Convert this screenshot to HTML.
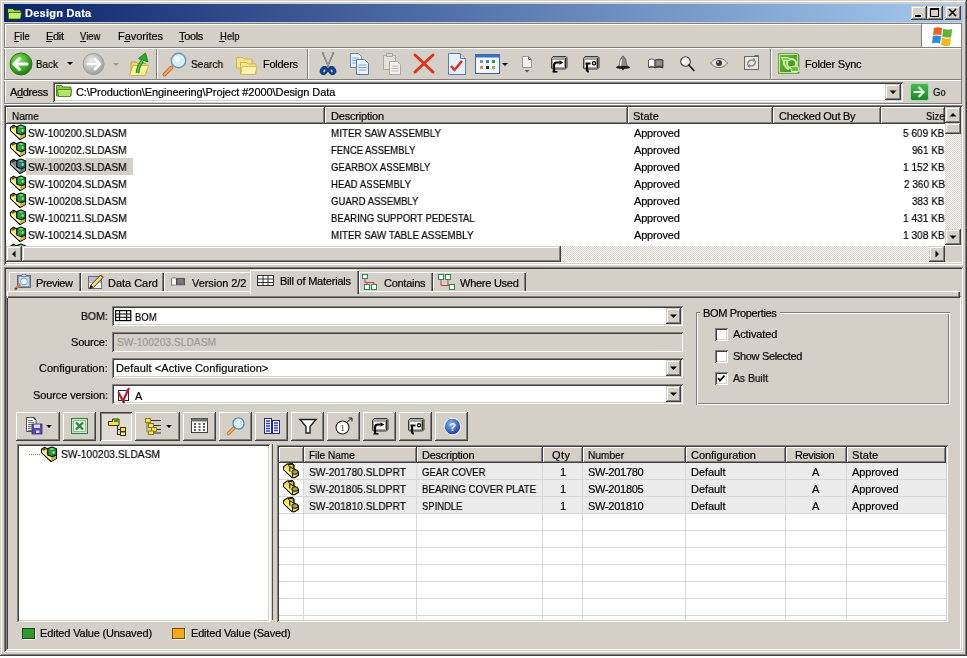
<!DOCTYPE html>
<html><head><meta charset="utf-8"><style>
html,body{margin:0;padding:0;width:967px;height:658px;overflow:hidden;background:#FFFFFF;}
.a{position:absolute;box-sizing:border-box;}
svg.a{overflow:visible;}
.t{position:absolute;font-family:'Liberation Sans', sans-serif;font-size:11px;line-height:13px;white-space:pre;color:#000;will-change:transform;-webkit-text-stroke:0.2px currentColor;}
</style></head><body>
<div class="a" style="left:0px;top:0px;width:967px;height:658px;background:#FFFFFF;"></div>
<div class="a" style="left:0px;top:0px;width:967px;height:656px;background:#D4D0C8;box-shadow:inset -1px -1px #404040,inset 1px 1px #D4D0C8,inset -2px -2px #808080,inset 2px 2px #FFFFFF;"></div>
<div class="a" style="left:4px;top:4px;width:959px;height:18px;background:linear-gradient(to right,#0A246A,#A6CAF0);"></div>
<svg class="a" style="left:6px;top:5px" width="17" height="16" viewBox="0 0 17 16"><path d="M1.5 3.5h5l1.5 1.5h7v9h-13.5z" fill="#A8D848" stroke="#1A3A0A" stroke-width="1"/><path d="M2.5 7.5h13l-1 6.5h-12z" fill="#C4F070" stroke="#2A5A10" stroke-width="0.8"/></svg>
<div class="t" style="left:24.80px;top:7px;letter-spacing:0.26px;color:#FFF;font-weight:bold;">Design Data</div>
<div class="a" style="left:911px;top:6px;width:16px;height:14px;background:#D4D0C8;box-shadow:inset -1px -1px #404040,inset 1px 1px #D4D0C8,inset -2px -2px #808080,inset 2px 2px #FFFFFF;"></div>
<svg class="a" style="left:911px;top:6px" width="16" height="14" viewBox="0 0 16 14"><rect x="4" y="9" width="6" height="2" fill="#000"/></svg>
<div class="a" style="left:927px;top:6px;width:16px;height:14px;background:#D4D0C8;box-shadow:inset -1px -1px #404040,inset 1px 1px #D4D0C8,inset -2px -2px #808080,inset 2px 2px #FFFFFF;"></div>
<svg class="a" style="left:927px;top:6px" width="16" height="14" viewBox="0 0 16 14"><rect x="3.5" y="2.5" width="8" height="8" fill="none" stroke="#000"/><rect x="3" y="2" width="9" height="2" fill="#000"/></svg>
<div class="a" style="left:945px;top:6px;width:16px;height:14px;background:#D4D0C8;box-shadow:inset -1px -1px #404040,inset 1px 1px #D4D0C8,inset -2px -2px #808080,inset 2px 2px #FFFFFF;"></div>
<svg class="a" style="left:945px;top:6px" width="16" height="14" viewBox="0 0 16 14"><path d="M4 3l7 7M11 3l-7 7" stroke="#000" stroke-width="1.6"/></svg>
<div class="a" style="left:4px;top:23px;width:958px;height:1px;background:#808080;"></div>
<div class="a" style="left:4px;top:24px;width:958px;height:1px;background:#FFFFFF;"></div>
<div class="a" style="left:4px;top:23px;width:1px;height:81px;background:#808080;"></div>
<div class="a" style="left:5px;top:24px;width:1px;height:80px;background:#FFFFFF;"></div>
<div class="a" style="left:4px;top:47px;width:958px;height:1px;background:#808080;"></div>
<div class="a" style="left:4px;top:48px;width:958px;height:1px;background:#FFFFFF;"></div>
<div class="a" style="left:4px;top:79px;width:958px;height:1px;background:#808080;"></div>
<div class="a" style="left:4px;top:80px;width:958px;height:1px;background:#FFFFFF;"></div>
<div class="a" style="left:4px;top:103px;width:958px;height:1px;background:#808080;"></div>
<div class="a" style="left:4px;top:104px;width:958px;height:1px;background:#FFFFFF;"></div>
<div class="a" style="left:961px;top:23px;width:1px;height:81px;background:#808080;"></div>
<div class="t" style="left:14.00px;top:30px;transform:scaleX(0.8941);transform-origin:0 0;color:#000;">File</div>
<div class="t" style="left:46.00px;top:30px;letter-spacing:-0.333px;color:#000;">Edit</div>
<div class="t" style="left:80.00px;top:30px;transform:scaleX(0.8542);transform-origin:0 0;color:#000;">View</div>
<div class="t" style="left:117.50px;top:30px;letter-spacing:-0.025px;color:#000;">Favorites</div>
<div class="t" style="left:179.20px;top:30px;letter-spacing:-0.35px;color:#000;">Tools</div>
<div class="t" style="left:219.70px;top:30px;transform:scaleX(0.8652);transform-origin:0 0;color:#000;">Help</div>
<div class="a" style="left:14px;top:41px;width:5px;height:1px;background:#000;"></div>
<div class="a" style="left:46px;top:41px;width:6px;height:1px;background:#000;"></div>
<div class="a" style="left:80px;top:41px;width:6px;height:1px;background:#000;"></div>
<div class="a" style="left:124px;top:41px;width:6px;height:1px;background:#000;"></div>
<div class="a" style="left:179px;top:41px;width:5px;height:1px;background:#000;"></div>
<div class="a" style="left:219px;top:41px;width:6px;height:1px;background:#000;"></div>
<div class="a" style="left:921px;top:24px;width:1px;height:23px;background:#808080;"></div>
<div class="a" style="left:922px;top:24px;width:39px;height:23px;background:#FFF;"></div>
<svg class="a" style="left:930px;top:25px" width="24" height="22" viewBox="0 0 24 22"><path d="M4 3C6 2 9 2 12.2 3L11.2 10.2C8.2 9.2 5.7 9.2 3 10.2Z" fill="#E8602C"/><path d="M13.2 3.4C15.7 4.4 18.2 4.9 22.2 3.9L21.2 11.9C18.2 12.9 15.7 12.4 12.2 11.4Z" fill="#5FB336"/><path d="M2.8 11.2C5 10.2 8 10.2 11 11.2L10 18.6C7 17.6 4.5 17.6 2 18.6Z" fill="#2F8BDE"/><path d="M12 12.6C15 13.6 17.5 14.1 21 13.1L20 20.6C17 21.6 14.5 21.1 11 20.1Z" fill="#F2B71B"/></svg>
<svg class="a" style="left:9px;top:52px" width="24" height="24" viewBox="0 0 24 24"><defs><radialGradient id="gb" cx="40%" cy="35%" r="65%"><stop offset="0" stop-color="#9BE27A"/><stop offset="0.6" stop-color="#3FAE2A"/><stop offset="1" stop-color="#1E7A12"/></radialGradient><radialGradient id="gg" cx="40%" cy="35%" r="65%"><stop offset="0" stop-color="#E8E8E8"/><stop offset="1" stop-color="#A8A8A8"/></radialGradient></defs><circle cx="12" cy="12" r="11" fill="url(#gb)" stroke="#2A7A1A" stroke-width="1"/><path d="M5 12h13M5 12l5.5-5.5M5 12l5.5 5.5" stroke="#fff" stroke-width="3" stroke-linecap="round" fill="none"/></svg>
<div class="t" style="left:36.40px;top:58px;transform:scaleX(0.8960);transform-origin:0 0;color:#000;">Back</div>
<svg class="a" style="left:67px;top:62px" width="7" height="4" viewBox="0 0 7 4"><path d="M0 0h6l-3 3z" fill="#000"/></svg>
<svg class="a" style="left:82px;top:52px" width="23" height="24" viewBox="0 0 23 24"><defs><radialGradient id="gg2" cx="40%" cy="35%" r="65%"><stop offset="0" stop-color="#EDEDED"/><stop offset="1" stop-color="#A0A0A0"/></radialGradient></defs><circle cx="11.5" cy="12" r="10.5" fill="url(#gg2)" stroke="#9A9A9A"/><path d="M18 12h-12M18 12l-5-5M18 12l-5 5" stroke="#fff" stroke-width="2.6" stroke-linecap="round" fill="none"/></svg>
<svg class="a" style="left:113px;top:63px" width="7" height="4" viewBox="0 0 7 4"><path d="M0 0h6l-3 3z" fill="#9A9A9A"/></svg>
<svg class="a" style="left:128px;top:52px" width="22" height="24" viewBox="0 0 22 24"><path d="M3 10h5l1.5 1.5h8.5v9l-2 2.5h-13z" fill="#EED46A" stroke="#B89A30" stroke-width="0.8"/><path d="M1.5 23.5l3.5-10h15.5l-3.5 10z" fill="#FBEFA0" stroke="#C8A840" stroke-width="0.8"/><path d="M9.5 21c0.5-5 2-9 5-12" stroke="#168A16" stroke-width="3.6" fill="none"/><path d="M9.5 21c0.5-5 2-9 5-12" stroke="#5CCB4C" stroke-width="1.4" fill="none"/><path d="M10.5 6.5l7-5.5l2.5 9z" fill="#2AAA2A" stroke="#147014" stroke-width="0.8"/></svg>
<div class="a" style="left:156px;top:49px;width:1px;height:30px;background:#808080;"></div>
<div class="a" style="left:157px;top:49px;width:1px;height:30px;background:#FFFFFF;"></div>
<svg class="a" style="left:162px;top:52px" width="26" height="24" viewBox="0 0 26 24"><path d="M2.5 22.5l7-7" stroke="#C87032" stroke-width="4" stroke-linecap="round"/><path d="M2.5 22.5l7-7" stroke="#F2A45E" stroke-width="2" stroke-linecap="round"/><circle cx="16.5" cy="8.5" r="7.2" fill="#D6EEF8" stroke="#6F95B0" stroke-width="1.4"/><circle cx="15" cy="7" r="3" fill="#fff" opacity="0.8"/></svg>
<div class="t" style="left:190.60px;top:58px;transform:scaleX(0.9200);transform-origin:0 0;color:#000;">Search</div>
<svg class="a" style="left:235px;top:54px" width="24" height="22" viewBox="0 0 24 22"><path d="M1.5 3.5h6l1.5 1.5h8v9h-15.5z" fill="#F7E48A" stroke="#C9A83A" stroke-width="0.8"/><path d="M5.5 8.5h6l1.5 1.5h8v10h-15.5z" fill="#F7E48A" stroke="#C9A83A" stroke-width="0.8"/><path d="M7 12.5h15l-2 8h-14z" fill="#FDF2B0" stroke="#D1B048" stroke-width="0.8"/></svg>
<div class="t" style="left:262.60px;top:58px;letter-spacing:-0.267px;color:#000;">Folders</div>
<div class="a" style="left:307px;top:49px;width:1px;height:30px;background:#808080;"></div>
<div class="a" style="left:308px;top:49px;width:1px;height:30px;background:#FFFFFF;"></div>
<svg class="a" style="left:318px;top:52px" width="20" height="24" viewBox="0 0 20 24"><path d="M4.5 0.5l6 14M15.5 0.5l-6 14" stroke="#4A5060" stroke-width="1.5"/><path d="M5 1.5l5.2 12M15 1.5l-5.2 12" stroke="#E8ECF4" stroke-width="0.5"/><ellipse cx="6" cy="18.5" rx="3.6" ry="4.3" transform="rotate(25 6 18.5)" fill="#16408E" stroke="#0E2A66" stroke-width="0.8"/><ellipse cx="14" cy="18.5" rx="3.6" ry="4.3" transform="rotate(-25 14 18.5)" fill="#16408E" stroke="#0E2A66" stroke-width="0.8"/><ellipse cx="6.3" cy="19" rx="1" ry="1.6" transform="rotate(25 6.3 19)" fill="#9CC8F4"/><ellipse cx="13.7" cy="19" rx="1" ry="1.6" transform="rotate(-25 13.7 19)" fill="#9CC8F4"/></svg>
<svg class="a" style="left:349px;top:52px" width="23" height="24" viewBox="0 0 23 24"><path d="M1.5 1.5h8l3 3v11h-11z" fill="#EAF2FC" stroke="#6C8CB8"/><path d="M3 6h7M3 8.5h7M3 11h7" stroke="#8AA8D0"/><path d="M7.5 7.5h8l4 4v11h-12z" fill="#EAF2FC" stroke="#5878A8"/><path d="M9.5 13h8M9.5 15.5h8M9.5 18h8" stroke="#7EA0CC"/></svg>
<svg class="a" style="left:381px;top:52px" width="22" height="24" viewBox="0 0 22 24"><path d="M2.5 3.5h12v14h-12z" fill="#E2E0DA" stroke="#A8A6A0"/><path d="M5.5 1.5h6v3h-6z" fill="#D8D6D0" stroke="#A8A6A0"/><path d="M8.5 9.5h8l3 3v10h-11z" fill="#F0EFEB" stroke="#A8A6A0"/><path d="M10.5 14h7M10.5 16.5h7M10.5 19h7" stroke="#C2C0BA"/></svg>
<svg class="a" style="left:412px;top:52px" width="24" height="22" viewBox="0 0 24 22"><path d="M3 3l18 17M21 3l-18 17" stroke="#D8361B" stroke-width="3" stroke-linecap="round"/></svg>
<svg class="a" style="left:447px;top:52px" width="21" height="24" viewBox="0 0 21 24"><path d="M1.5 1.5h12l5 5v16h-17z" fill="#E6F0FC" stroke="#5A7FB8"/><path d="M13.5 1.5v5h5" fill="#C8DCF4" stroke="#5A7FB8"/><path d="M4 14l3.5 4l7.5-9" stroke="#E02A1A" stroke-width="2.4" fill="none"/></svg>
<svg class="a" style="left:475px;top:54px" width="26" height="21" viewBox="0 0 26 21"><rect x="0.5" y="0.5" width="24" height="19" fill="#F4F8FC" stroke="#3A62A8"/><rect x="0.5" y="0.5" width="24" height="3" fill="#3A6EC8"/><rect x="5" y="6" width="3" height="3" fill="#8888A8"/><rect x="11" y="6" width="3" height="3" fill="#5878A8"/><rect x="17" y="6" width="3" height="3" fill="#2A9A3A"/><rect x="5" y="12" width="3" height="3" fill="#D89050"/><rect x="11" y="12" width="3" height="3" fill="#203858"/><rect x="17" y="12" width="3" height="3" fill="#B89868"/></svg>
<svg class="a" style="left:502px;top:63px" width="7" height="4" viewBox="0 0 7 4"><path d="M0 0h6l-3 3z" fill="#000"/></svg>
<svg class="a" style="left:521px;top:55px" width="13" height="19" viewBox="0 0 13 19"><path d="M1.5 1.5h6l3 3v8h-9z" fill="#F2F2F0" stroke="#9A9A98"/><path d="M7.5 1.5v3h3" fill="none" stroke="#6A6A68"/><path d="M3.5 15h5l-2.5 2.5z" fill="#5A5A58"/></svg>
<svg class="a" style="left:550px;top:55px" width="19" height="19" viewBox="0 0 19 19"><path d="M1.5 3.5l1.5-2h13l1 1v10l-1.5 1.5h-13l-1-1z" fill="#A8A8A6" stroke="#3A3A38" stroke-width="1"/><path d="M15.5 3v10" stroke="#2A2A28" stroke-width="1.2"/><rect x="2.5" y="4.5" width="12" height="8" fill="#F6F6F4" stroke="#9A9A98" stroke-width="0.8"/><path d="M4 16.5v-6c0-1.8 1-3 2.8-3h3" stroke="#0A0A0A" stroke-width="2.2" fill="none"/><path d="M9.5 5.2l3.8 2.3l-3.8 2.3z" fill="#0A0A0A"/><path d="M2.5 16.8h5" stroke="#0A0A0A" stroke-width="1.6"/></svg>
<svg class="a" style="left:582px;top:55px" width="19" height="19" viewBox="0 0 19 19"><path d="M1.5 3.5l1.5-2h13l1 1v10l-1.5 1.5h-13l-1-1z" fill="#A8A8A6" stroke="#3A3A38" stroke-width="1"/><path d="M15.5 3v10" stroke="#2A2A28" stroke-width="1.2"/><rect x="2.5" y="4.5" width="12" height="8" fill="#F6F6F4" stroke="#9A9A98" stroke-width="0.8"/><path d="M3.5 8.5h5M5 8.5v6c0 1.2 0.8 2 2 2" stroke="#0A0A0A" stroke-width="2.2" fill="none"/><circle cx="12" cy="8.3" r="1.6" fill="none" stroke="#0A0A0A" stroke-width="1.3"/></svg>
<svg class="a" style="left:614px;top:54px" width="18" height="18" viewBox="0 0 18 18"><path d="M9 2c-0.8 0-1.1 0.7-1.1 1.3c-1.4 0.8-1.9 2.4-2.1 4.8c-0.2 2.2-0.8 3.4-2.2 4.9h10.8c-1.4-1.5-2-2.7-2.2-4.9c-0.2-2.4-0.7-4-2.1-4.8c0-0.6-0.3-1.3-1.1-1.3z" fill="#8A8A88" stroke="#4A4A48" stroke-width="0.7"/><path d="M7.6 5.5c-0.7 1.5-0.9 3.8-1.2 6.2" stroke="#FAFAF8" stroke-width="1.5"/><ellipse cx="9" cy="13.4" rx="7" ry="1.5" fill="#1A1A18"/><circle cx="9" cy="15.3" r="0.9" fill="#1A1A18"/></svg>
<svg class="a" style="left:647px;top:57px" width="18" height="13" viewBox="0 0 18 13"><path d="M1.5 3c2-1.2 4.5-1.2 6.5 0v7.5c-2-1-4.5-1-6.5 0z" fill="#FAFAF8" stroke="#4A4A48" stroke-width="0.9"/><path d="M8 3c2.5-1 5.5-1 8 0v7.5c-2.5-1-5.5-1-8 0z" fill="#7A7A78" stroke="#3A3A38" stroke-width="0.9"/><path d="M9.5 5h5M9.5 7h5" stroke="#B8B8B6" stroke-width="0.8"/><path d="M2 10.5c2-0.6 4-0.6 6 0.3c2-0.9 5-0.9 8 0" stroke="#2A2A28" stroke-width="1" fill="none"/></svg>
<svg class="a" style="left:679px;top:55px" width="17" height="18" viewBox="0 0 17 18"><circle cx="6.5" cy="6.5" r="4.8" fill="#F8F8F6" stroke="#3A3A38" stroke-width="1.1"/><path d="M9.8 9.8l5 5.5" stroke="#2A2A28" stroke-width="1.8" stroke-linecap="round"/></svg>
<svg class="a" style="left:709px;top:57px" width="20" height="12" viewBox="0 0 20 12"><path d="M1.5 6c3-3.5 5.5-4.5 8.5-4.5s5.5 1 8.5 4.5c-3 3.5-5.5 4.5-8.5 4.5s-5.5-1-8.5-4.5z" fill="#E0E0DE" stroke="#6A6A68" stroke-width="1"/><circle cx="10" cy="6" r="3" fill="#3A3A38"/><circle cx="9" cy="5" r="0.9" fill="#CFCFCD"/></svg>
<svg class="a" style="left:743px;top:54px" width="18" height="18" viewBox="0 0 18 18"><rect x="1.5" y="2.5" width="14" height="13" fill="#E8E8E6" stroke="#6A6A68"/><path d="M11.5 1.5h4v4" fill="none" stroke="#6A6A68"/><path d="M4.5 11c0-3 2-5 5-5h2M12.5 7c0 3-2 5-5 5h-2" stroke="#8A8A88" stroke-width="1.5" fill="none"/><path d="M10 4l3 2l-3 2zM7 10l-3 2l3 2z" fill="#8A8A88"/></svg>
<div class="a" style="left:770px;top:49px;width:1px;height:30px;background:#808080;"></div>
<div class="a" style="left:771px;top:49px;width:1px;height:30px;background:#FFFFFF;"></div>
<svg class="a" style="left:777px;top:51px" width="24" height="24" viewBox="0 0 24 24"><defs><linearGradient id="fsg" x1="0" y1="0" x2="1" y2="1"><stop offset="0" stop-color="#6CBF3A"/><stop offset="1" stop-color="#3C8A12"/></linearGradient></defs><path d="M1.5 2.5h19l1.5 1.5v18.5h-20.5z" fill="url(#fsg)" stroke="#7A9A6A" stroke-width="1"/><path d="M2.5 3.5h18v18h-18z" fill="none" stroke="#C6F2A0" stroke-width="0.9"/><circle cx="14.5" cy="12.5" r="4.6" fill="none" stroke="#C8F4A0" stroke-width="2"/><path d="M4.5 6.5h7l1.5 3h-7z" fill="#80CC50" stroke="#D6F8B8" stroke-width="1"/><path d="M7 9.5c-0.5 4 1.5 7 5 9" stroke="#C8F4A0" stroke-width="2" fill="none"/><path d="M13.5 15.5h7.5l1 5h-7.5z" fill="#70BC40" stroke="#D6F8B8" stroke-width="1"/></svg>
<div class="t" style="left:805.30px;top:58px;letter-spacing:-0.21px;color:#000;">Folder Sync</div>
<div class="t" style="left:10.00px;top:86px;letter-spacing:-0.35px;color:#000;">Address</div>
<div class="a" style="left:17px;top:97px;width:6px;height:1px;background:#000;"></div>
<div class="a" style="left:53px;top:82px;width:850px;height:20px;background:#FFFFFF;box-shadow:inset 1px 1px #808080,inset -1px -1px #FFFFFF,inset 2px 2px #404040,inset -2px -2px #D4D0C8;"></div>
<svg class="a" style="left:55px;top:83px" width="18" height="15" viewBox="0 0 18 15"><path d="M1.5 2.5h5l1.5 1.5h8v9h-14.5z" fill="#8CC63F" stroke="#3B7A14" stroke-width="0.9"/><path d="M2.5 6.5h14l-1 7h-12z" fill="#B2E36A" stroke="#3B7A14" stroke-width="0.8"/></svg>
<div class="t" style="left:76.00px;top:86px;letter-spacing:-0.072px;color:#000;">C:\Production\Engineering\Project #2000\Design Data</div>
<div class="a" style="left:885px;top:84px;width:16px;height:16px;background:#D4D0C8;box-shadow:inset -1px -1px #404040,inset 1px 1px #D4D0C8,inset -2px -2px #808080,inset 2px 2px #FFFFFF;"></div>
<svg class="a" style="left:885px;top:84px" width="16" height="16" viewBox="0 0 16 16"><path d="M4.5 6.5h7l-3.5 3.5z" fill="#000"/></svg>
<svg class="a" style="left:910px;top:83px" width="19" height="18" viewBox="0 0 19 18"><defs><linearGradient id="gog" x1="0" y1="0" x2="0" y2="1"><stop offset="0" stop-color="#4CB85A"/><stop offset="1" stop-color="#1C8426"/></linearGradient></defs><rect x="0.5" y="0.5" width="18" height="17" rx="2" fill="url(#gog)" stroke="#9BE0A0" stroke-width="1"/><path d="M3.5 9h10M8.5 4l5 5l-5 5" stroke="#DFF7D8" stroke-width="2.2" fill="none"/></svg>
<div class="t" style="left:932.50px;top:86px;transform:scaleX(0.8667);transform-origin:0 0;color:#000;">Go</div>
<div class="a" style="left:4px;top:105px;width:959px;height:160px;background:#FFFFFF;box-shadow:inset 1px 1px #808080,inset -1px -1px #FFFFFF,inset 2px 2px #404040,inset -2px -2px #D4D0C8;"></div>
<div class="a" style="left:6px;top:107px;width:939px;height:139px;background:#FFF;"></div>
<div class="a" style="left:6px;top:107px;width:319px;height:17px;background:#D4D0C8;box-shadow:inset -1px -1px #404040,inset 1px 1px #FFFFFF,inset -2px -2px #808080;"></div>
<div class="a" style="left:325px;top:107px;width:303px;height:17px;background:#D4D0C8;box-shadow:inset -1px -1px #404040,inset 1px 1px #FFFFFF,inset -2px -2px #808080;"></div>
<div class="a" style="left:628px;top:107px;width:145px;height:17px;background:#D4D0C8;box-shadow:inset -1px -1px #404040,inset 1px 1px #FFFFFF,inset -2px -2px #808080;"></div>
<div class="a" style="left:773px;top:107px;width:108px;height:17px;background:#D4D0C8;box-shadow:inset -1px -1px #404040,inset 1px 1px #FFFFFF,inset -2px -2px #808080;"></div>
<div class="a" style="left:881px;top:107px;width:64px;height:17px;background:#D4D0C8;box-shadow:inset -1px -1px #404040,inset 1px 1px #FFFFFF,inset -2px -2px #808080;"></div>
<div class="t" style="left:11.60px;top:110px;transform:scaleX(0.9103);transform-origin:0 0;color:#000;">Name</div>
<div class="t" style="left:330.50px;top:110px;letter-spacing:-0.19px;color:#000;">Description</div>
<div class="t" style="left:633.30px;top:110px;letter-spacing:0.025px;color:#000;">State</div>
<div class="t" style="left:778.80px;top:110px;letter-spacing:-0.269px;color:#000;">Checked Out By</div>
<div class="t" style="left:925.90px;top:110px;transform:scaleX(0.8667);transform-origin:0 0;color:#000;">Size</div>
<svg class="a" style="left:10px;top:124px" width="16" height="16" viewBox="0 0 16 16"><path d="M0.5 3.2L3.6 1.2L7 3.3V9.4L15.5 9V12.6L10 15.5L0.5 6.6Z" fill="#F2E45A" stroke="#000" stroke-width="1.1" stroke-linejoin="round"/><path d="M1 3.3L3.6 1.7L5.5 2.9L2.6 4.8Z" fill="#5A5020"/><path d="M1.3 5.4L9.8 13.4" stroke="#FFFAB0" stroke-width="1.6"/><path d="M10.3 11.4L15.2 9.3V12.4L10.2 15Z" fill="#D8B050"/><path d="M6.8 2.6L10.8 1.1L15.5 2.8V8.9L11.4 10.8L6.8 9Z" fill="#1A7A24" stroke="#002000" stroke-width="1.2" stroke-linejoin="round"/><path d="M7.7 3.8L11 5.1V9.7L7.7 8.4Z" fill="#3A9E46"/><path d="M11.7 5.1L14.7 3.7V8.3L11.7 9.8Z" fill="#22862E"/><path d="M7.9 2.9L10.8 1.8L14.2 3L11.2 4.4Z" fill="#7ACB84"/><ellipse cx="12.6" cy="6.4" rx="1.3" ry="1.6" fill="#7EDC8A"/></svg>
<div class="t" style="left:27.50px;top:127px;transform:scaleX(0.9292);transform-origin:0 0;color:#000;">SW-100200.SLDASM</div>
<div class="t" style="left:330.80px;top:127px;transform:scaleX(0.8959);transform-origin:0 0;color:#000;">MITER SAW ASSEMBLY</div>
<div class="t" style="left:634.10px;top:127px;letter-spacing:-0.185px;color:#000;">Approved</div>
<div class="t" style="left:903.30px;top:127px;transform:scaleX(0.9111);transform-origin:0 0;color:#000;">5 609 KB</div>
<svg class="a" style="left:10px;top:141px" width="16" height="16" viewBox="0 0 16 16"><path d="M0.5 3.2L3.6 1.2L7 3.3V9.4L15.5 9V12.6L10 15.5L0.5 6.6Z" fill="#F2E45A" stroke="#000" stroke-width="1.1" stroke-linejoin="round"/><path d="M1 3.3L3.6 1.7L5.5 2.9L2.6 4.8Z" fill="#5A5020"/><path d="M1.3 5.4L9.8 13.4" stroke="#FFFAB0" stroke-width="1.6"/><path d="M10.3 11.4L15.2 9.3V12.4L10.2 15Z" fill="#D8B050"/><path d="M6.8 2.6L10.8 1.1L15.5 2.8V8.9L11.4 10.8L6.8 9Z" fill="#1A7A24" stroke="#002000" stroke-width="1.2" stroke-linejoin="round"/><path d="M7.7 3.8L11 5.1V9.7L7.7 8.4Z" fill="#3A9E46"/><path d="M11.7 5.1L14.7 3.7V8.3L11.7 9.8Z" fill="#22862E"/><path d="M7.9 2.9L10.8 1.8L14.2 3L11.2 4.4Z" fill="#7ACB84"/><ellipse cx="12.6" cy="6.4" rx="1.3" ry="1.6" fill="#7EDC8A"/></svg>
<div class="t" style="left:27.50px;top:144px;transform:scaleX(0.9292);transform-origin:0 0;color:#000;">SW-100202.SLDASM</div>
<div class="t" style="left:330.80px;top:144px;transform:scaleX(0.8582);transform-origin:0 0;color:#000;">FENCE ASSEMBLY</div>
<div class="t" style="left:634.10px;top:144px;letter-spacing:-0.185px;color:#000;">Approved</div>
<div class="t" style="left:912.00px;top:144px;transform:scaleX(0.8972);transform-origin:0 0;color:#000;">961 KB</div>
<div class="a" style="left:26px;top:158px;width:107px;height:17px;background:#D4D0C8;"></div>
<svg class="a" style="left:10px;top:158px" width="16" height="16" viewBox="0 0 16 16"><path d="M0.5 3.2L3.6 1.2L7 3.3V9.4L15.5 9V12.6L10 15.5L0.5 6.6Z" fill="#7A8884" stroke="#000" stroke-width="1.1" stroke-linejoin="round"/><path d="M1 3.3L3.6 1.7L5.5 2.9L2.6 4.8Z" fill="#303838"/><path d="M1.3 5.4L9.8 13.4" stroke="#A8B8B8" stroke-width="1.6"/><path d="M10.3 11.4L15.2 9.3V12.4L10.2 15Z" fill="#6A7878"/><path d="M6.8 2.6L10.8 1.1L15.5 2.8V8.9L11.4 10.8L6.8 9Z" fill="#1E5A68" stroke="#002000" stroke-width="1.2" stroke-linejoin="round"/><path d="M7.7 3.8L11 5.1V9.7L7.7 8.4Z" fill="#3A7888"/><path d="M11.7 5.1L14.7 3.7V8.3L11.7 9.8Z" fill="#2A6878"/><path d="M7.9 2.9L10.8 1.8L14.2 3L11.2 4.4Z" fill="#7AA8B0"/><ellipse cx="12.6" cy="6.4" rx="1.3" ry="1.6" fill="#7EDC8A"/></svg>
<div class="t" style="left:27.50px;top:161px;transform:scaleX(0.9292);transform-origin:0 0;color:#000;">SW-100203.SLDASM</div>
<div class="t" style="left:330.80px;top:161px;transform:scaleX(0.8609);transform-origin:0 0;color:#000;">GEARBOX ASSEMBLY</div>
<div class="t" style="left:634.10px;top:161px;letter-spacing:-0.185px;color:#000;">Approved</div>
<div class="t" style="left:902.88px;top:161px;transform:scaleX(0.9205);transform-origin:0 0;color:#000;">1 152 KB</div>
<svg class="a" style="left:10px;top:175px" width="16" height="16" viewBox="0 0 16 16"><path d="M0.5 3.2L3.6 1.2L7 3.3V9.4L15.5 9V12.6L10 15.5L0.5 6.6Z" fill="#F2E45A" stroke="#000" stroke-width="1.1" stroke-linejoin="round"/><path d="M1 3.3L3.6 1.7L5.5 2.9L2.6 4.8Z" fill="#5A5020"/><path d="M1.3 5.4L9.8 13.4" stroke="#FFFAB0" stroke-width="1.6"/><path d="M10.3 11.4L15.2 9.3V12.4L10.2 15Z" fill="#D8B050"/><path d="M6.8 2.6L10.8 1.1L15.5 2.8V8.9L11.4 10.8L6.8 9Z" fill="#1A7A24" stroke="#002000" stroke-width="1.2" stroke-linejoin="round"/><path d="M7.7 3.8L11 5.1V9.7L7.7 8.4Z" fill="#3A9E46"/><path d="M11.7 5.1L14.7 3.7V8.3L11.7 9.8Z" fill="#22862E"/><path d="M7.9 2.9L10.8 1.8L14.2 3L11.2 4.4Z" fill="#7ACB84"/><ellipse cx="12.6" cy="6.4" rx="1.3" ry="1.6" fill="#7EDC8A"/></svg>
<div class="t" style="left:27.50px;top:178px;transform:scaleX(0.9292);transform-origin:0 0;color:#000;">SW-100204.SLDASM</div>
<div class="t" style="left:330.80px;top:178px;transform:scaleX(0.8736);transform-origin:0 0;color:#000;">HEAD ASSEMBLY</div>
<div class="t" style="left:634.10px;top:178px;letter-spacing:-0.185px;color:#000;">Approved</div>
<div class="t" style="left:903.50px;top:178px;transform:scaleX(0.9067);transform-origin:0 0;color:#000;">2 360 KB</div>
<svg class="a" style="left:10px;top:192px" width="16" height="16" viewBox="0 0 16 16"><path d="M0.5 3.2L3.6 1.2L7 3.3V9.4L15.5 9V12.6L10 15.5L0.5 6.6Z" fill="#F2E45A" stroke="#000" stroke-width="1.1" stroke-linejoin="round"/><path d="M1 3.3L3.6 1.7L5.5 2.9L2.6 4.8Z" fill="#5A5020"/><path d="M1.3 5.4L9.8 13.4" stroke="#FFFAB0" stroke-width="1.6"/><path d="M10.3 11.4L15.2 9.3V12.4L10.2 15Z" fill="#D8B050"/><path d="M6.8 2.6L10.8 1.1L15.5 2.8V8.9L11.4 10.8L6.8 9Z" fill="#1A7A24" stroke="#002000" stroke-width="1.2" stroke-linejoin="round"/><path d="M7.7 3.8L11 5.1V9.7L7.7 8.4Z" fill="#3A9E46"/><path d="M11.7 5.1L14.7 3.7V8.3L11.7 9.8Z" fill="#22862E"/><path d="M7.9 2.9L10.8 1.8L14.2 3L11.2 4.4Z" fill="#7ACB84"/><ellipse cx="12.6" cy="6.4" rx="1.3" ry="1.6" fill="#7EDC8A"/></svg>
<div class="t" style="left:27.50px;top:195px;transform:scaleX(0.9292);transform-origin:0 0;color:#000;">SW-100208.SLDASM</div>
<div class="t" style="left:330.80px;top:195px;transform:scaleX(0.8690);transform-origin:0 0;color:#000;">GUARD ASSEMBLY</div>
<div class="t" style="left:634.10px;top:195px;letter-spacing:-0.185px;color:#000;">Approved</div>
<div class="t" style="left:912.00px;top:195px;transform:scaleX(0.8972);transform-origin:0 0;color:#000;">383 KB</div>
<svg class="a" style="left:10px;top:209px" width="16" height="16" viewBox="0 0 16 16"><path d="M0.5 3.2L3.6 1.2L7 3.3V9.4L15.5 9V12.6L10 15.5L0.5 6.6Z" fill="#F2E45A" stroke="#000" stroke-width="1.1" stroke-linejoin="round"/><path d="M1 3.3L3.6 1.7L5.5 2.9L2.6 4.8Z" fill="#5A5020"/><path d="M1.3 5.4L9.8 13.4" stroke="#FFFAB0" stroke-width="1.6"/><path d="M10.3 11.4L15.2 9.3V12.4L10.2 15Z" fill="#D8B050"/><path d="M6.8 2.6L10.8 1.1L15.5 2.8V8.9L11.4 10.8L6.8 9Z" fill="#1A7A24" stroke="#002000" stroke-width="1.2" stroke-linejoin="round"/><path d="M7.7 3.8L11 5.1V9.7L7.7 8.4Z" fill="#3A9E46"/><path d="M11.7 5.1L14.7 3.7V8.3L11.7 9.8Z" fill="#22862E"/><path d="M7.9 2.9L10.8 1.8L14.2 3L11.2 4.4Z" fill="#7ACB84"/><ellipse cx="12.6" cy="6.4" rx="1.3" ry="1.6" fill="#7EDC8A"/></svg>
<div class="t" style="left:27.50px;top:212px;transform:scaleX(0.9381);transform-origin:0 0;color:#000;">SW-100211.SLDASM</div>
<div class="t" style="left:330.80px;top:212px;transform:scaleX(0.8709);transform-origin:0 0;color:#000;">BEARING SUPPORT PEDESTAL</div>
<div class="t" style="left:634.10px;top:212px;letter-spacing:-0.185px;color:#000;">Approved</div>
<div class="t" style="left:902.88px;top:212px;transform:scaleX(0.9205);transform-origin:0 0;color:#000;">1 431 KB</div>
<svg class="a" style="left:10px;top:226px" width="16" height="16" viewBox="0 0 16 16"><path d="M0.5 3.2L3.6 1.2L7 3.3V9.4L15.5 9V12.6L10 15.5L0.5 6.6Z" fill="#F2E45A" stroke="#000" stroke-width="1.1" stroke-linejoin="round"/><path d="M1 3.3L3.6 1.7L5.5 2.9L2.6 4.8Z" fill="#5A5020"/><path d="M1.3 5.4L9.8 13.4" stroke="#FFFAB0" stroke-width="1.6"/><path d="M10.3 11.4L15.2 9.3V12.4L10.2 15Z" fill="#D8B050"/><path d="M6.8 2.6L10.8 1.1L15.5 2.8V8.9L11.4 10.8L6.8 9Z" fill="#1A7A24" stroke="#002000" stroke-width="1.2" stroke-linejoin="round"/><path d="M7.7 3.8L11 5.1V9.7L7.7 8.4Z" fill="#3A9E46"/><path d="M11.7 5.1L14.7 3.7V8.3L11.7 9.8Z" fill="#22862E"/><path d="M7.9 2.9L10.8 1.8L14.2 3L11.2 4.4Z" fill="#7ACB84"/><ellipse cx="12.6" cy="6.4" rx="1.3" ry="1.6" fill="#7EDC8A"/></svg>
<div class="t" style="left:27.50px;top:229px;transform:scaleX(0.9292);transform-origin:0 0;color:#000;">SW-100214.SLDASM</div>
<div class="t" style="left:330.80px;top:229px;transform:scaleX(0.8918);transform-origin:0 0;color:#000;">MITER SAW TABLE ASSEMBLY</div>
<div class="t" style="left:634.10px;top:229px;letter-spacing:-0.185px;color:#000;">Approved</div>
<div class="t" style="left:902.88px;top:229px;transform:scaleX(0.9205);transform-origin:0 0;color:#000;">1 308 KB</div>
<svg class="a" style="left:10px;top:243px" width="16" height="16" viewBox="0 0 16 16"><path d="M0.5 3.2L3.6 1.2L7 3.3V9.4L15.5 9V12.6L10 15.5L0.5 6.6Z" fill="#F2E45A" stroke="#000" stroke-width="1.1" stroke-linejoin="round"/><path d="M1 3.3L3.6 1.7L5.5 2.9L2.6 4.8Z" fill="#5A5020"/><path d="M1.3 5.4L9.8 13.4" stroke="#FFFAB0" stroke-width="1.6"/><path d="M10.3 11.4L15.2 9.3V12.4L10.2 15Z" fill="#D8B050"/><path d="M6.8 2.6L10.8 1.1L15.5 2.8V8.9L11.4 10.8L6.8 9Z" fill="#1A7A24" stroke="#002000" stroke-width="1.2" stroke-linejoin="round"/><path d="M7.7 3.8L11 5.1V9.7L7.7 8.4Z" fill="#3A9E46"/><path d="M11.7 5.1L14.7 3.7V8.3L11.7 9.8Z" fill="#22862E"/><path d="M7.9 2.9L10.8 1.8L14.2 3L11.2 4.4Z" fill="#7ACB84"/><ellipse cx="12.6" cy="6.4" rx="1.3" ry="1.6" fill="#7EDC8A"/></svg>
<div class="a" style="left:945px;top:107px;width:16px;height:138px;background:repeating-conic-gradient(#FFF 0 25%,#D4D0C8 0 50%) 0 0/2px 2px;"></div>
<div class="a" style="left:945px;top:107px;width:16px;height:16px;background:#D4D0C8;box-shadow:inset -1px -1px #404040,inset 1px 1px #D4D0C8,inset -2px -2px #808080,inset 2px 2px #FFFFFF;"></div>
<svg class="a" style="left:945px;top:107px" width="16" height="16" viewBox="0 0 16 16"><path d="M4.5 9.5h7l-3.5-3.5z" fill="#000"/></svg>
<div class="a" style="left:945px;top:123px;width:16px;height:11px;background:#D4D0C8;box-shadow:inset -1px -1px #404040,inset 1px 1px #D4D0C8,inset -2px -2px #808080,inset 2px 2px #FFFFFF;"></div>
<div class="a" style="left:945px;top:229px;width:16px;height:16px;background:#D4D0C8;box-shadow:inset -1px -1px #404040,inset 1px 1px #D4D0C8,inset -2px -2px #808080,inset 2px 2px #FFFFFF;"></div>
<svg class="a" style="left:945px;top:229px" width="16" height="16" viewBox="0 0 16 16"><path d="M4.5 6.5h7l-3.5 3.5z" fill="#000"/></svg>
<div class="a" style="left:6px;top:246px;width:939px;height:16px;background:repeating-conic-gradient(#FFF 0 25%,#D4D0C8 0 50%) 0 0/2px 2px;"></div>
<div class="a" style="left:6px;top:246px;width:16px;height:16px;background:#D4D0C8;box-shadow:inset -1px -1px #404040,inset 1px 1px #D4D0C8,inset -2px -2px #808080,inset 2px 2px #FFFFFF;"></div>
<svg class="a" style="left:6px;top:246px" width="16" height="16" viewBox="0 0 16 16"><path d="M9.5 4.5v7l-3.5-3.5z" fill="#000"/></svg>
<div class="a" style="left:22px;top:246px;width:539px;height:16px;background:#D4D0C8;box-shadow:inset -1px -1px #404040,inset 1px 1px #D4D0C8,inset -2px -2px #808080,inset 2px 2px #FFFFFF;"></div>
<div class="a" style="left:929px;top:246px;width:16px;height:16px;background:#D4D0C8;box-shadow:inset -1px -1px #404040,inset 1px 1px #D4D0C8,inset -2px -2px #808080,inset 2px 2px #FFFFFF;"></div>
<svg class="a" style="left:929px;top:246px" width="16" height="16" viewBox="0 0 16 16"><path d="M6.5 4.5v7l3.5-3.5z" fill="#000"/></svg>
<div class="a" style="left:945px;top:246px;width:16px;height:16px;background:#D4D0C8;"></div>
<div class="a" style="left:4px;top:267px;width:959px;height:385px;background:#D4D0C8;box-shadow:inset 1px 1px #808080,inset -1px -1px #FFFFFF,inset 2px 2px #404040,inset -2px -2px #D4D0C8;"></div>
<div class="a" style="left:6px;top:296px;width:955px;height:354px;background:#D4D0C8;box-shadow:inset 1px 1px #808080,inset -1px -1px #FFFFFF,inset 2px 2px #404040,inset -2px -2px #D4D0C8;"></div>
<div class="a" style="left:7px;top:291px;width:953px;height:7px;background:#D4D0C8;box-shadow:inset 1px 1px #FFFFFF,inset -1px -1px #404040,inset -2px -2px #808080;"></div>
<div class="a" style="left:9px;top:272px;width:72px;height:19px;background:#D4D0C8;box-shadow:inset 1px 1px #FFFFFF,inset -1px 0 #404040,inset -2px 0 #808080;"></div>
<div class="a" style="left:81px;top:272px;width:83px;height:19px;background:#D4D0C8;box-shadow:inset 1px 1px #FFFFFF,inset -1px 0 #404040,inset -2px 0 #808080;"></div>
<div class="a" style="left:164px;top:272px;width:87px;height:19px;background:#D4D0C8;box-shadow:inset 1px 1px #FFFFFF;"></div>
<div class="a" style="left:250px;top:270px;width:109px;height:24px;background:#D4D0C8;box-shadow:inset 1px 1px #FFFFFF,inset -1px 0 #404040,inset -2px 0 #808080;"></div>
<div class="a" style="left:359px;top:272px;width:74px;height:19px;background:#D4D0C8;box-shadow:inset 1px 1px #FFFFFF,inset -1px 0 #404040,inset -2px 0 #808080;"></div>
<div class="a" style="left:433px;top:272px;width:93px;height:19px;background:#D4D0C8;box-shadow:inset 1px 1px #FFFFFF,inset -1px 0 #404040,inset -2px 0 #808080;"></div>
<svg class="a" style="left:14px;top:273px" width="18" height="17" viewBox="0 0 18 17"><rect x="3.5" y="2.5" width="13" height="12" fill="#8A9AB0" stroke="#5A6A80"/><rect x="5" y="4" width="10" height="9" fill="#C8D8E8"/><path d="M8 1.5h4v2h-4z" fill="#E8E8E8" stroke="#6A7A90" stroke-width="0.8"/><circle cx="10" cy="8.5" r="3.4" fill="#F4FAFF" stroke="#7AA0D0" stroke-width="1"/><path d="M1.5 16l4-4" stroke="#C88050" stroke-width="2.6" stroke-linecap="round"/><path d="M1.5 16.2l1-1" stroke="#303030" stroke-width="1.6"/></svg>
<div class="t" style="left:36.30px;top:277px;letter-spacing:-0.367px;color:#000;">Preview</div>
<svg class="a" style="left:87px;top:273px" width="18" height="17" viewBox="0 0 18 17"><rect x="1.5" y="3.5" width="13" height="12" fill="#FFF" stroke="#6A6A80"/><rect x="2" y="4" width="12" height="6" fill="#9A8AC0" opacity="0.6"/><path d="M2.5 15.5l1.5-3.5l9.5-10l2.5 2.5l-9.5 10z" fill="#F2E070" stroke="#2A2A1A" stroke-width="0.9"/><path d="M13 2.5l2.5 2.5l1-1l-2.5-2.5z" fill="#B04020"/><path d="M2.5 15.5l1.5-3.5l2 2z" fill="#101010"/></svg>
<div class="t" style="left:108.20px;top:277px;letter-spacing:-0.025px;color:#000;">Data Card</div>
<svg class="a" style="left:170px;top:275px" width="17" height="12" viewBox="0 0 17 12"><path d="M1.5 3.5c1.5-1 3.5-1 5 0v7c-1.5-0.8-3.5-0.8-5 0z" fill="#F4F4F4" stroke="#6A6A6A" stroke-width="0.9"/><path d="M6.5 3.5h8v7h-8z" fill="#6A6A6A" stroke="#4A4A4A" stroke-width="0.9"/><path d="M8 5h5M8 7h5" stroke="#9A9A9A" stroke-width="0.8"/><path d="M2 10.5h13" stroke="#B8A8C8" stroke-width="1"/></svg>
<div class="t" style="left:192.00px;top:277px;letter-spacing:-0.06px;color:#000;">Version 2/2</div>
<svg class="a" style="left:257px;top:275px" width="17" height="12" viewBox="0 0 17 12"><rect x="0.5" y="0.5" width="16" height="10" fill="#FFF" stroke="#333"/><path d="M0.5 4h16M0.5 7.5h16M6 0.5v10M11 0.5v10" stroke="#333"/></svg>
<div class="t" style="left:279.70px;top:275px;letter-spacing:-0.224px;color:#000;">Bill of Materials</div>
<svg class="a" style="left:362px;top:274px" width="17" height="16" viewBox="0 0 17 16"><rect x="0.5" y="0.5" width="5" height="4" fill="#FFF" stroke="#2A8A4A"/><path d="M3 4.5v4h9v2M5 8.5v2" stroke="#C04040" fill="none"/><rect x="2.5" y="10.5" width="5" height="5" fill="#FFF" stroke="#2A8A4A"/><rect x="9.5" y="10.5" width="5" height="5" fill="#FFF" stroke="#2A8A4A"/></svg>
<div class="t" style="left:384.30px;top:277px;letter-spacing:-0.272px;color:#000;">Contains</div>
<svg class="a" style="left:438px;top:274px" width="17" height="16" viewBox="0 0 17 16"><rect x="0.5" y="0.5" width="5" height="5" fill="#FFF" stroke="#2A8A4A"/><rect x="7.5" y="0.5" width="5" height="5" fill="#FFF" stroke="#2A8A4A"/><path d="M3 5.5v6h8M10 5.5v6" stroke="#C04040" fill="none"/><rect x="11.5" y="10.5" width="5" height="5" fill="#FFF" stroke="#2A8A4A"/></svg>
<div class="t" style="left:460.30px;top:277px;letter-spacing:-0.255px;color:#000;">Where Used</div>
<div class="t" style="left:81.40px;top:310px;transform:scaleX(0.9481);transform-origin:0 0;color:#000;">BOM:</div>
<div class="t" style="left:70.70px;top:336px;letter-spacing:-0.184px;color:#000;">Source:</div>
<div class="t" style="left:38.60px;top:362px;letter-spacing:0.016px;color:#000;">Configuration:</div>
<div class="t" style="left:32.80px;top:389px;letter-spacing:-0.101px;color:#000;">Source version:</div>
<div class="a" style="left:112px;top:306px;width:571px;height:20px;background:#FFF;box-shadow:inset 1px 1px #808080,inset -1px -1px #FFFFFF,inset 2px 2px #404040,inset -2px -2px #D4D0C8;"></div>
<div class="a" style="left:666px;top:308px;width:15px;height:16px;background:#D4D0C8;box-shadow:inset -1px -1px #404040,inset 1px 1px #D4D0C8,inset -2px -2px #808080,inset 2px 2px #FFFFFF;"></div>
<svg class="a" style="left:666px;top:308px" width="15" height="16" viewBox="0 0 15 16"><path d="M4.0 6.5h7l-3.5 3.5z" fill="#000"/></svg>
<div class="a" style="left:112px;top:332px;width:571px;height:20px;background:#D4D0C8;box-shadow:inset 1px 1px #808080,inset -1px -1px #FFFFFF,inset 2px 2px #404040,inset -2px -2px #D4D0C8;"></div>
<div class="a" style="left:112px;top:358px;width:571px;height:20px;background:#FFF;box-shadow:inset 1px 1px #808080,inset -1px -1px #FFFFFF,inset 2px 2px #404040,inset -2px -2px #D4D0C8;"></div>
<div class="a" style="left:666px;top:360px;width:15px;height:16px;background:#D4D0C8;box-shadow:inset -1px -1px #404040,inset 1px 1px #D4D0C8,inset -2px -2px #808080,inset 2px 2px #FFFFFF;"></div>
<svg class="a" style="left:666px;top:360px" width="15" height="16" viewBox="0 0 15 16"><path d="M4.0 6.5h7l-3.5 3.5z" fill="#000"/></svg>
<div class="a" style="left:112px;top:384px;width:571px;height:20px;background:#FFF;box-shadow:inset 1px 1px #808080,inset -1px -1px #FFFFFF,inset 2px 2px #404040,inset -2px -2px #D4D0C8;"></div>
<div class="a" style="left:666px;top:386px;width:15px;height:16px;background:#D4D0C8;box-shadow:inset -1px -1px #404040,inset 1px 1px #D4D0C8,inset -2px -2px #808080,inset 2px 2px #FFFFFF;"></div>
<svg class="a" style="left:666px;top:386px" width="15" height="16" viewBox="0 0 15 16"><path d="M4.0 6.5h7l-3.5 3.5z" fill="#000"/></svg>
<svg class="a" style="left:115px;top:310px" width="17" height="12" viewBox="0 0 17 12"><rect x="0.6" y="0.6" width="15.2" height="10" fill="#FFF" stroke="#000" stroke-width="1.2"/><path d="M0.6 4h15.2M0.6 7.3h15.2M4.6 0.6v10M11.6 0.6v10" stroke="#000" stroke-width="1.1"/></svg>
<div class="t" style="left:134.60px;top:311px;transform:scaleX(0.8600);transform-origin:0 0;color:#000;">BOM</div>
<div class="t" style="left:117.40px;top:336px;transform:scaleX(0.9340);transform-origin:0 0;color:#9A9894;">SW-100203.SLDASM</div>
<div class="t" style="left:115.60px;top:362px;letter-spacing:0.107px;color:#000;">Default &lt;Active Configuration&gt;</div>
<svg class="a" style="left:116px;top:386px" width="16" height="18" viewBox="0 0 16 18"><rect x="2.5" y="4.5" width="10" height="10" fill="#FFF" stroke="#2A2A2A" stroke-width="1"/><path d="M2.5 6.5l4.5 8.5l6-13" stroke="#C41A28" stroke-width="2.2" fill="none"/><path d="M7.5 15.5l1 1.5" stroke="#101010" stroke-width="1.4"/></svg>
<div class="t" style="left:135.00px;top:390px;letter-spacing:0.0px;color:#000;">A</div>
<div class="a" style="left:696px;top:312px;width:254px;height:93px;box-shadow:inset 1px 1px #808080,inset 2px 2px #FFFFFF,inset -1px -1px #FFFFFF,inset -2px -2px #808080;"></div>
<div class="a" style="left:700px;top:306px;width:80px;height:12px;background:#D4D0C8;"></div>
<div class="t" style="left:703.40px;top:307px;letter-spacing:-0.346px;color:#000;">BOM Properties</div>
<div class="a" style="left:715px;top:328px;width:13px;height:13px;background:#FFF;box-shadow:inset 1px 1px #808080,inset -1px -1px #FFFFFF,inset 2px 2px #404040,inset -2px -2px #D4D0C8;"></div>
<div class="a" style="left:715px;top:350px;width:13px;height:13px;background:#FFF;box-shadow:inset 1px 1px #808080,inset -1px -1px #FFFFFF,inset 2px 2px #404040,inset -2px -2px #D4D0C8;"></div>
<div class="a" style="left:715px;top:372px;width:13px;height:13px;background:#FFF;box-shadow:inset 1px 1px #808080,inset -1px -1px #FFFFFF,inset 2px 2px #404040,inset -2px -2px #D4D0C8;"></div>
<svg class="a" style="left:715px;top:372px" width="13" height="13" viewBox="0 0 13 13"><path d="M3 6l2 2.5l4.5-5" stroke="#000" stroke-width="1.8" fill="none"/></svg>
<div class="t" style="left:733.00px;top:328px;letter-spacing:-0.111px;color:#000;">Activated</div>
<div class="t" style="left:733.00px;top:350px;letter-spacing:-0.333px;color:#000;">Show Selected</div>
<div class="t" style="left:733.00px;top:372px;transform:scaleX(0.9378);transform-origin:0 0;color:#000;">As Built</div>
<div class="a" style="left:16px;top:412px;width:44px;height:29px;background:#D4D0C8;box-shadow:inset -1px -1px #404040,inset 1px 1px #FFFFFF,inset -2px -2px #808080;"></div>
<div class="a" style="left:63px;top:412px;width:33px;height:29px;background:#D4D0C8;box-shadow:inset -1px -1px #404040,inset 1px 1px #FFFFFF,inset -2px -2px #808080;"></div>
<div class="a" style="left:100px;top:412px;width:32px;height:29px;background:#DFDCD5;box-shadow:inset 1px 1px #404040,inset -1px -1px #FFFFFF,inset 2px 2px #808080;"></div>
<div class="a" style="left:135px;top:412px;width:45px;height:29px;background:#D4D0C8;box-shadow:inset -1px -1px #404040,inset 1px 1px #FFFFFF,inset -2px -2px #808080;"></div>
<div class="a" style="left:183px;top:412px;width:33px;height:29px;background:#D4D0C8;box-shadow:inset -1px -1px #404040,inset 1px 1px #FFFFFF,inset -2px -2px #808080;"></div>
<div class="a" style="left:219px;top:412px;width:33px;height:29px;background:#D4D0C8;box-shadow:inset -1px -1px #404040,inset 1px 1px #FFFFFF,inset -2px -2px #808080;"></div>
<div class="a" style="left:255px;top:412px;width:33px;height:29px;background:#D4D0C8;box-shadow:inset -1px -1px #404040,inset 1px 1px #FFFFFF,inset -2px -2px #808080;"></div>
<div class="a" style="left:291px;top:412px;width:33px;height:29px;background:#D4D0C8;box-shadow:inset -1px -1px #404040,inset 1px 1px #FFFFFF,inset -2px -2px #808080;"></div>
<div class="a" style="left:327px;top:412px;width:33px;height:29px;background:#D4D0C8;box-shadow:inset -1px -1px #404040,inset 1px 1px #FFFFFF,inset -2px -2px #808080;"></div>
<div class="a" style="left:363px;top:412px;width:33px;height:29px;background:#D4D0C8;box-shadow:inset -1px -1px #404040,inset 1px 1px #FFFFFF,inset -2px -2px #808080;"></div>
<div class="a" style="left:399px;top:412px;width:33px;height:29px;background:#D4D0C8;box-shadow:inset -1px -1px #404040,inset 1px 1px #FFFFFF,inset -2px -2px #808080;"></div>
<div class="a" style="left:435px;top:412px;width:33px;height:29px;background:#D4D0C8;box-shadow:inset -1px -1px #404040,inset 1px 1px #FFFFFF,inset -2px -2px #808080;"></div>
<svg class="a" style="left:25px;top:417px" width="19" height="18" viewBox="0 0 19 18"><path d="M1.5 0.5h7l2.5 2.5v11.5h-9.5z" fill="#FFF" stroke="#404040" stroke-width="0.9"/><path d="M3 3.5h5M3 5.5h6M3 7.5h6M3 9.5h6M3 11.5h6M3 13.5h6" stroke="#505050" stroke-width="0.8"/><path d="M8.5 0.5l2 2" stroke="#202020" stroke-width="1.4"/><rect x="7" y="7" width="10" height="10" fill="#5A48B8" stroke="#3A2A88" stroke-width="0.8"/><rect x="9" y="7.5" width="6" height="3.5" fill="#E0E0F4"/><rect x="11" y="13.5" width="3.5" height="2.5" fill="#D8D8F0"/></svg>
<svg class="a" style="left:46px;top:425px" width="7" height="4" viewBox="0 0 7 4"><path d="M0 0h6l-3 3z" fill="#000"/></svg>
<svg class="a" style="left:71px;top:418px" width="18" height="17" viewBox="0 0 18 17"><rect x="0.5" y="0.5" width="16" height="15" fill="#CFE6CF" stroke="#3A7A3A"/><rect x="2.5" y="2.5" width="12" height="11" fill="#EAF6EA" stroke="#7AB07A" stroke-width="0.8"/><path d="M5 4.5l7 7M12 4.5l-7 7" stroke="#2A8A3A" stroke-width="2.4"/></svg>
<svg class="a" style="left:107px;top:416px" width="20" height="20" viewBox="0 0 20 20"><path d="M1.5 5.5h4v-2.5h6.5v6.5h-10.5z" fill="#F2E23A" stroke="#3A3200" stroke-width="1"/><rect x="7" y="3" width="4.5" height="3" fill="#3A9A30"/><path d="M10.5 9.5v9h3M10.5 13.5h3" stroke="#3A3200" stroke-width="1.1" fill="none"/><rect x="13.5" y="11.5" width="5" height="4" fill="#F4E070" stroke="#3A3200"/><rect x="13.5" y="16" width="5" height="3.5" fill="#FFF4B0" stroke="#3A3200"/></svg>
<svg class="a" style="left:145px;top:417px" width="18" height="18" viewBox="0 0 18 18"><rect x="0.5" y="1.5" width="5" height="4" fill="#F8E060" stroke="#8A7A10"/><path d="M6 3.5h10" stroke="#333"/><rect x="3.5" y="6.5" width="5" height="4" fill="#F8E060" stroke="#8A7A10"/><path d="M9 8.5h7" stroke="#333"/><rect x="6.5" y="10.5" width="5" height="4" fill="#F8E060" stroke="#8A7A10"/><path d="M12 12.5h4" stroke="#333"/><rect x="3.5" y="14" width="5" height="3.5" fill="#F8E060" stroke="#8A7A10"/><path d="M9 16h7" stroke="#333"/><path d="M2 5.5v10" stroke="#8A7A10"/></svg>
<svg class="a" style="left:166px;top:425px" width="7" height="4" viewBox="0 0 7 4"><path d="M0 0h6l-3 3z" fill="#000"/></svg>
<svg class="a" style="left:191px;top:418px" width="18" height="16" viewBox="0 0 18 16"><rect x="0.5" y="0.5" width="16" height="14" fill="#FFF" stroke="#404040"/><rect x="0.5" y="0.5" width="16" height="3" fill="#707070"/><path d="M3 6h2M7.5 6h2M12 6h2M3 9h2M7.5 9h2M12 9h2M3 12h2M7.5 12h2M12 12h2" stroke="#303030" stroke-width="1.6"/></svg>
<svg class="a" style="left:226px;top:416px" width="20" height="20" viewBox="0 0 20 20"><path d="M2.5 17.5l6-6" stroke="#D07830" stroke-width="3.6" stroke-linecap="round"/><path d="M2.5 17.5l6-6" stroke="#F8B070" stroke-width="1.6" stroke-linecap="round"/><circle cx="12.5" cy="7.5" r="5.6" fill="#D8F0FC" stroke="#5A8AB0" stroke-width="1.3"/></svg>
<svg class="a" style="left:263px;top:417px" width="18" height="18" viewBox="0 0 18 18"><rect x="1.5" y="1.5" width="7" height="15" fill="#FFF" stroke="#1A2A8A"/><rect x="9.5" y="3.5" width="7" height="13" fill="#FFF" stroke="#1A2A8A"/><path d="M3 4h4M3 6.5h4M3 9h4M3 11.5h4M3 14h4M11 6h4M11 8.5h4M11 11h4M11 13.5h4" stroke="#2A3ACA" stroke-width="1.3"/></svg>
<svg class="a" style="left:299px;top:417px" width="18" height="18" viewBox="0 0 18 18"><path d="M1 2.5h16l-6 7v6.5h-4v-6.5z" fill="#FFF" stroke="#202020" stroke-width="1.4"/></svg>
<svg class="a" style="left:334px;top:417px" width="20" height="19" viewBox="0 0 20 19"><circle cx="8.5" cy="10.5" r="6.5" fill="#FFF" stroke="#202020" stroke-width="1.1"/><text x="8.5" y="14" font-family="Liberation Serif" font-size="9" text-anchor="middle" fill="#202020">1</text><path d="M13 5l5-4M14.5 1h3.5v3.5" stroke="#202020" fill="none"/></svg>
<svg class="a" style="left:371px;top:417px" width="19" height="19" viewBox="0 0 19 19"><path d="M1.5 3.5l1.5-2h13l1 1v10l-1.5 1.5h-13l-1-1z" fill="#A8A8A6" stroke="#3A3A38" stroke-width="1"/><path d="M15.5 3v10" stroke="#2A2A28" stroke-width="1.2"/><rect x="2.5" y="4.5" width="12" height="8" fill="#F6F6F4" stroke="#9A9A98" stroke-width="0.8"/><path d="M4 16.5v-6c0-1.8 1-3 2.8-3h3" stroke="#0A0A0A" stroke-width="2.2" fill="none"/><path d="M9.5 5.2l3.8 2.3l-3.8 2.3z" fill="#0A0A0A"/><path d="M2.5 16.8h5" stroke="#0A0A0A" stroke-width="1.6"/></svg>
<svg class="a" style="left:407px;top:417px" width="19" height="19" viewBox="0 0 19 19"><path d="M1.5 3.5l1.5-2h13l1 1v10l-1.5 1.5h-13l-1-1z" fill="#A8A8A6" stroke="#3A3A38" stroke-width="1"/><path d="M15.5 3v10" stroke="#2A2A28" stroke-width="1.2"/><rect x="2.5" y="4.5" width="12" height="8" fill="#F6F6F4" stroke="#9A9A98" stroke-width="0.8"/><path d="M3.5 8.5h5M5 8.5v6c0 1.2 0.8 2 2 2" stroke="#0A0A0A" stroke-width="2.2" fill="none"/><circle cx="12" cy="8.3" r="1.6" fill="none" stroke="#0A0A0A" stroke-width="1.3"/></svg>
<svg class="a" style="left:443px;top:417px" width="19" height="19" viewBox="0 0 19 19"><defs><radialGradient id="hb" cx="40%" cy="35%" r="65%"><stop offset="0" stop-color="#8AB4F8"/><stop offset="1" stop-color="#1A3AA8"/></radialGradient></defs><circle cx="9.5" cy="9.5" r="8.3" fill="url(#hb)" stroke="#E8F0FF" stroke-width="1.2"/><text x="9.5" y="13.5" font-family="Liberation Sans" font-weight="bold" font-size="11" text-anchor="middle" fill="#FFF">?</text></svg>
<div class="a" style="left:17px;top:444px;width:253px;height:178px;background:#FFF;box-shadow:inset 1px 1px #808080,inset -1px -1px #FFFFFF,inset 2px 2px #404040,inset -2px -2px #D4D0C8;"></div>
<div class="a" style="left:270px;top:444px;width:1px;height:177px;background:#F4F3F0;"></div>
<div class="a" style="left:272px;top:444px;width:1px;height:176px;background:#505050;"></div>
<div class="a" style="left:29px;top:454px;width:1px;height:1px;background:#808080;"></div>
<div class="a" style="left:31px;top:454px;width:1px;height:1px;background:#808080;"></div>
<div class="a" style="left:33px;top:454px;width:1px;height:1px;background:#808080;"></div>
<div class="a" style="left:35px;top:454px;width:1px;height:1px;background:#808080;"></div>
<div class="a" style="left:37px;top:454px;width:1px;height:1px;background:#808080;"></div>
<div class="a" style="left:39px;top:454px;width:1px;height:1px;background:#808080;"></div>
<svg class="a" style="left:41px;top:446px" width="16" height="16" viewBox="0 0 16 16"><path d="M0.5 3.2L3.6 1.2L7 3.3V9.4L15.5 9V12.6L10 15.5L0.5 6.6Z" fill="#F2E45A" stroke="#000" stroke-width="1.1" stroke-linejoin="round"/><path d="M1 3.3L3.6 1.7L5.5 2.9L2.6 4.8Z" fill="#5A5020"/><path d="M1.3 5.4L9.8 13.4" stroke="#FFFAB0" stroke-width="1.6"/><path d="M10.3 11.4L15.2 9.3V12.4L10.2 15Z" fill="#D8B050"/><path d="M6.8 2.6L10.8 1.1L15.5 2.8V8.9L11.4 10.8L6.8 9Z" fill="#1A7A24" stroke="#002000" stroke-width="1.2" stroke-linejoin="round"/><path d="M7.7 3.8L11 5.1V9.7L7.7 8.4Z" fill="#3A9E46"/><path d="M11.7 5.1L14.7 3.7V8.3L11.7 9.8Z" fill="#22862E"/><path d="M7.9 2.9L10.8 1.8L14.2 3L11.2 4.4Z" fill="#7ACB84"/><ellipse cx="12.6" cy="6.4" rx="1.3" ry="1.6" fill="#7EDC8A"/></svg>
<div class="t" style="left:61.20px;top:448px;transform:scaleX(0.9321);transform-origin:0 0;color:#000;">SW-100203.SLDASM</div>
<div class="a" style="left:277px;top:445px;width:671px;height:177px;background:#FFF;box-shadow:inset 1px 1px #808080,inset -1px -1px #FFFFFF,inset 2px 2px #404040,inset -2px -2px #D4D0C8;"></div>
<div class="a" style="left:279px;top:447px;width:25px;height:16px;background:#D4D0C8;box-shadow:inset -1px -1px #404040,inset 1px 1px #FFFFFF,inset -2px -2px #808080;"></div>
<div class="a" style="left:304px;top:447px;width:113px;height:16px;background:#D4D0C8;box-shadow:inset -1px -1px #404040,inset 1px 1px #FFFFFF,inset -2px -2px #808080;"></div>
<div class="a" style="left:417px;top:447px;width:126px;height:16px;background:#D4D0C8;box-shadow:inset -1px -1px #404040,inset 1px 1px #FFFFFF,inset -2px -2px #808080;"></div>
<div class="a" style="left:543px;top:447px;width:40px;height:16px;background:#D4D0C8;box-shadow:inset -1px -1px #404040,inset 1px 1px #FFFFFF,inset -2px -2px #808080;"></div>
<div class="a" style="left:583px;top:447px;width:103px;height:16px;background:#D4D0C8;box-shadow:inset -1px -1px #404040,inset 1px 1px #FFFFFF,inset -2px -2px #808080;"></div>
<div class="a" style="left:686px;top:447px;width:100px;height:16px;background:#D4D0C8;box-shadow:inset -1px -1px #404040,inset 1px 1px #FFFFFF,inset -2px -2px #808080;"></div>
<div class="a" style="left:786px;top:447px;width:61px;height:16px;background:#D4D0C8;box-shadow:inset -1px -1px #404040,inset 1px 1px #FFFFFF,inset -2px -2px #808080;"></div>
<div class="a" style="left:847px;top:447px;width:99px;height:16px;background:#D4D0C8;box-shadow:inset -1px -1px #404040,inset 1px 1px #FFFFFF,inset -2px -2px #808080;"></div>
<div class="t" style="left:309.40px;top:449px;transform:scaleX(0.9140);transform-origin:0 0;color:#000;">File Name</div>
<div class="t" style="left:422.30px;top:449px;letter-spacing:-0.25px;color:#000;">Description</div>
<div class="t" style="left:552.10px;top:449px;letter-spacing:0.5px;color:#000;">Qty</div>
<div class="t" style="left:587.90px;top:449px;transform:scaleX(0.9231);transform-origin:0 0;color:#000;">Number</div>
<div class="t" style="left:690.60px;top:449px;letter-spacing:-0.042px;color:#000;">Configuration</div>
<div class="t" style="left:794.50px;top:449px;letter-spacing:-0.357px;color:#000;">Revision</div>
<div class="t" style="left:851.70px;top:449px;letter-spacing:0.125px;color:#000;">State</div>
<div class="a" style="left:304px;top:463px;width:642px;height:16px;background:#EBEBEB;"></div>
<div class="a" style="left:279px;top:479px;width:667px;height:1px;background:#D8D8D8;"></div>
<div class="a" style="left:304px;top:480px;width:642px;height:16px;background:#EBEBEB;"></div>
<div class="a" style="left:279px;top:496px;width:667px;height:1px;background:#D8D8D8;"></div>
<div class="a" style="left:304px;top:497px;width:642px;height:16px;background:#EBEBEB;"></div>
<div class="a" style="left:279px;top:513px;width:667px;height:1px;background:#D8D8D8;"></div>
<div class="a" style="left:279px;top:530px;width:667px;height:1px;background:#D8D8D8;"></div>
<div class="a" style="left:279px;top:547px;width:667px;height:1px;background:#D8D8D8;"></div>
<div class="a" style="left:279px;top:564px;width:667px;height:1px;background:#D8D8D8;"></div>
<div class="a" style="left:279px;top:581px;width:667px;height:1px;background:#D8D8D8;"></div>
<div class="a" style="left:279px;top:598px;width:667px;height:1px;background:#D8D8D8;"></div>
<div class="a" style="left:279px;top:615px;width:667px;height:1px;background:#D8D8D8;"></div>
<div class="a" style="left:303px;top:463px;width:1px;height:157px;background:#D8D8D8;"></div>
<div class="a" style="left:416px;top:463px;width:1px;height:157px;background:#D8D8D8;"></div>
<div class="a" style="left:542px;top:463px;width:1px;height:157px;background:#D8D8D8;"></div>
<div class="a" style="left:582px;top:463px;width:1px;height:157px;background:#D8D8D8;"></div>
<div class="a" style="left:685px;top:463px;width:1px;height:157px;background:#D8D8D8;"></div>
<div class="a" style="left:785px;top:463px;width:1px;height:157px;background:#D8D8D8;"></div>
<div class="a" style="left:846px;top:463px;width:1px;height:157px;background:#D8D8D8;"></div>
<svg class="a" style="left:283px;top:463px" width="17" height="16" viewBox="0 0 17 16"><path d="M0.6 3.6L4.2 1L9.4 0.6L11 2.2V5.8L15.4 9.2V12.2L11.6 14.8L9 14.6L0.6 6.6Z" fill="#F4E24A" stroke="#000" stroke-width="1.1" stroke-linejoin="round"/><path d="M1.2 5.2L9.6 13.2" stroke="#FFFAB8" stroke-width="1.5"/><path d="M5.2 1.6L9.2 1.3L10.3 2.5V6L6.6 3.6Z" fill="#E8D040" stroke="#000" stroke-width="0.9"/><path d="M6.8 3.6V8.5" stroke="#000" stroke-width="1"/><ellipse cx="12" cy="9" rx="3.2" ry="2.3" fill="#B89A58" stroke="#000" stroke-width="0.9"/><path d="M9.6 14.2V11" stroke="#000" stroke-width="1"/></svg>
<div class="t" style="left:309.40px;top:466px;transform:scaleX(0.9308);transform-origin:0 0;color:#000;">SW-201780.SLDPRT</div>
<div class="t" style="left:422.30px;top:466px;transform:scaleX(0.8658);transform-origin:0 0;color:#000;">GEAR COVER</div>
<div class="t" style="left:559.50px;top:466px;letter-spacing:0.0px;color:#000;">1</div>
<div class="t" style="left:587.90px;top:466px;letter-spacing:-0.275px;color:#000;">SW-201780</div>
<div class="t" style="left:690.60px;top:466px;letter-spacing:-0.051px;color:#000;">Default</div>
<div class="t" style="left:811.60px;top:466px;letter-spacing:0.0px;color:#000;">A</div>
<div class="t" style="left:851.70px;top:466px;letter-spacing:-0.071px;color:#000;">Approved</div>
<svg class="a" style="left:283px;top:480px" width="17" height="16" viewBox="0 0 17 16"><path d="M0.6 3.6L4.2 1L9.4 0.6L11 2.2V5.8L15.4 9.2V12.2L11.6 14.8L9 14.6L0.6 6.6Z" fill="#F4E24A" stroke="#000" stroke-width="1.1" stroke-linejoin="round"/><path d="M1.2 5.2L9.6 13.2" stroke="#FFFAB8" stroke-width="1.5"/><path d="M5.2 1.6L9.2 1.3L10.3 2.5V6L6.6 3.6Z" fill="#E8D040" stroke="#000" stroke-width="0.9"/><path d="M6.8 3.6V8.5" stroke="#000" stroke-width="1"/><ellipse cx="12" cy="9" rx="3.2" ry="2.3" fill="#B89A58" stroke="#000" stroke-width="0.9"/><path d="M9.6 14.2V11" stroke="#000" stroke-width="1"/></svg>
<div class="t" style="left:309.40px;top:483px;transform:scaleX(0.9308);transform-origin:0 0;color:#000;">SW-201805.SLDPRT</div>
<div class="t" style="left:422.30px;top:483px;transform:scaleX(0.8860);transform-origin:0 0;color:#000;">BEARING COVER PLATE</div>
<div class="t" style="left:559.50px;top:483px;letter-spacing:0.0px;color:#000;">1</div>
<div class="t" style="left:587.90px;top:483px;letter-spacing:-0.275px;color:#000;">SW-201805</div>
<div class="t" style="left:690.60px;top:483px;letter-spacing:-0.051px;color:#000;">Default</div>
<div class="t" style="left:811.60px;top:483px;letter-spacing:0.0px;color:#000;">A</div>
<div class="t" style="left:851.70px;top:483px;letter-spacing:-0.071px;color:#000;">Approved</div>
<svg class="a" style="left:283px;top:497px" width="17" height="16" viewBox="0 0 17 16"><path d="M0.6 3.6L4.2 1L9.4 0.6L11 2.2V5.8L15.4 9.2V12.2L11.6 14.8L9 14.6L0.6 6.6Z" fill="#F4E24A" stroke="#000" stroke-width="1.1" stroke-linejoin="round"/><path d="M1.2 5.2L9.6 13.2" stroke="#FFFAB8" stroke-width="1.5"/><path d="M5.2 1.6L9.2 1.3L10.3 2.5V6L6.6 3.6Z" fill="#E8D040" stroke="#000" stroke-width="0.9"/><path d="M6.8 3.6V8.5" stroke="#000" stroke-width="1"/><ellipse cx="12" cy="9" rx="3.2" ry="2.3" fill="#B89A58" stroke="#000" stroke-width="0.9"/><path d="M9.6 14.2V11" stroke="#000" stroke-width="1"/></svg>
<div class="t" style="left:309.40px;top:500px;transform:scaleX(0.9308);transform-origin:0 0;color:#000;">SW-201810.SLDPRT</div>
<div class="t" style="left:422.30px;top:500px;transform:scaleX(0.8596);transform-origin:0 0;color:#000;">SPINDLE</div>
<div class="t" style="left:559.50px;top:500px;letter-spacing:0.0px;color:#000;">1</div>
<div class="t" style="left:587.90px;top:500px;letter-spacing:-0.275px;color:#000;">SW-201810</div>
<div class="t" style="left:690.60px;top:500px;letter-spacing:-0.051px;color:#000;">Default</div>
<div class="t" style="left:811.60px;top:500px;letter-spacing:0.0px;color:#000;">A</div>
<div class="t" style="left:851.70px;top:500px;letter-spacing:-0.071px;color:#000;">Approved</div>
<div class="a" style="left:22px;top:628px;width:14px;height:12px;background:#FFF;"></div>
<div class="a" style="left:22px;top:628px;width:13px;height:11px;background:#2E9A2E;box-shadow:inset 0 0 0 1px #1A4A1A;"></div>
<div class="t" style="left:40.30px;top:627px;letter-spacing:-0.158px;color:#000;">Edited Value (Unsaved)</div>
<div class="a" style="left:172px;top:628px;width:14px;height:12px;background:#FFF;"></div>
<div class="a" style="left:172px;top:628px;width:13px;height:11px;background:#F6A818;box-shadow:inset 0 0 0 1px #7A5010;"></div>
<div class="t" style="left:190.50px;top:627px;letter-spacing:-0.184px;color:#000;">Edited Value (Saved)</div>
</body></html>
